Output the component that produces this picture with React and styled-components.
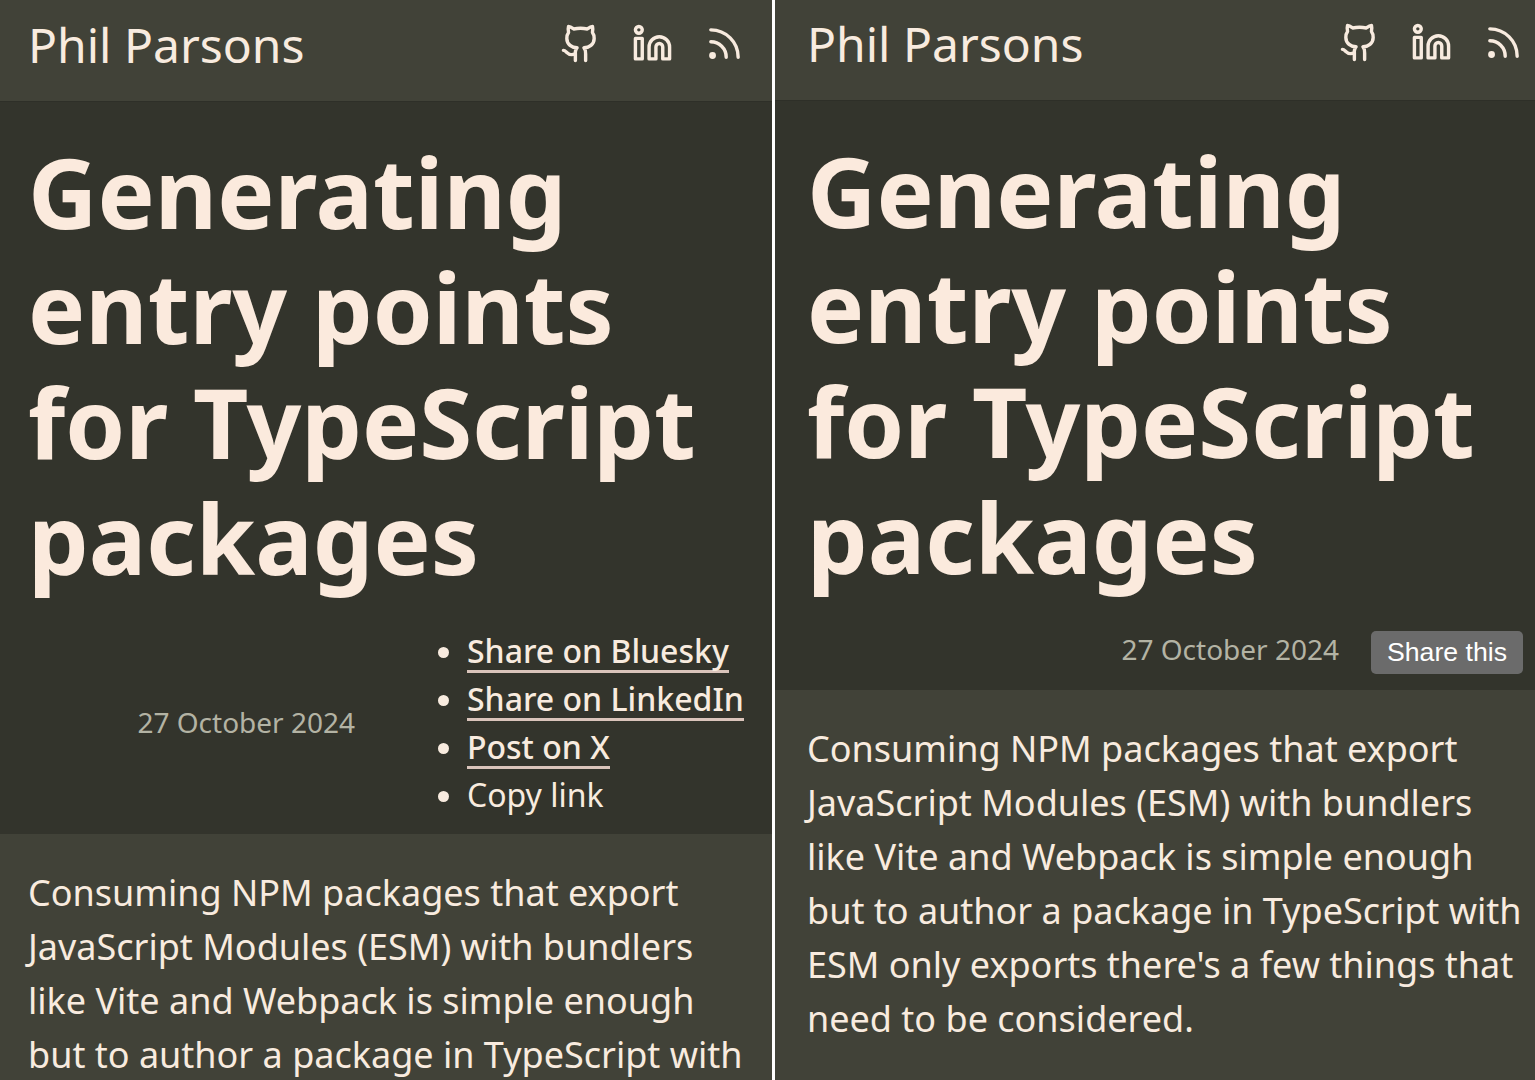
import React from 'react';
import styled, { createGlobalStyle } from 'styled-components';
import { Github, Linkedin, Rss } from 'lucide-react';

const GlobalStyle = createGlobalStyle`
  * { box-sizing: border-box; }
  body {
    margin: 0;
    background: #fff;
    color: #f8ebdf;
    font-family: "Noto Sans", sans-serif;
    overflow: hidden;
  }
`;

const Comparison = styled.main`
  display: grid;
  grid-template-columns: 772px 760px;
  column-gap: 3px;
  width: 1535px;
  height: 1080px;
  overflow: hidden;
`;

const Page = styled.article`
  --start: ${(p) => p.$start};
  --end: ${(p) => p.$end};
  display: flex;
  flex-direction: column;
  min-width: 0;
  height: 1080px;
  overflow: hidden;
  background: #414238;
`;

const TopBar = styled.header`
  flex: none;
  display: flex;
  justify-content: space-between;
  align-items: flex-start;
  height: ${(p) => p.$height};
  padding: ${(p) => p.$top} ${(p) => p.$end} 0 var(--start);
`;

const SiteName = styled.a`
  font-size: 48px;
  line-height: 66px;
  margin-top: -11px;
  white-space: nowrap;
`;

const Social = styled.nav`
  display: flex;
  gap: 31px;
  svg { display: block; }
`;

const Hero = styled.section`
  flex: none;
  height: ${(p) => p.$height};
  padding-top: 32px;
  border-top: 1px solid #2e2f28;
  background: #33342c;
`;

const Title = styled.h1`
  margin: 0;
  padding-left: var(--start);
  color: #fbeadd;
  font-size: 96px;
  line-height: 115.2px;
  font-weight: 700;
  white-space: nowrap;
`;

const Meta = styled.div`
  display: flex;
  justify-content: flex-end;
  align-items: ${(p) => p.$align};
  padding: ${(p) => p.$top} var(--end) 0 var(--start);
`;

const Published = styled.time`
  margin: -1px ${(p) => p.$gap} 1px 0;
  color: #b3b3a4;
  font-size: 28px;
  line-height: 38px;
  white-space: nowrap;
`;

const ShareList = styled.ul`
  width: 278px;
  margin: 0;
  padding: 0;
  font-size: 32px;
  line-height: 48px;
  white-space: nowrap;
`;

const ShareItem = styled.li`
  height: 48px;
`;

const ShareLink = styled.a`
  display: inline-block;
  height: 46px;
  border-bottom: 3px solid #dac4bb;
  font-weight: 500;
`;

const ShareButton = styled.button`
  width: 152px;
  height: 43px;
  padding: 0;
  border: 0;
  border-radius: 5px;
  background: #6b6b6b;
  color: #fff;
  font: 26.67px/43px "Liberation Sans", Arial, sans-serif;
`;

const Intro = styled.p`
  margin: 0;
  padding: ${(p) => p.$top} 0 0 var(--start);
  font-size: 36px;
  line-height: 54px;
  white-space: nowrap;
`;

const titleLines = ['Generating', 'entry points', 'for TypeScript', 'packages'];
const introLines = [
  'Consuming NPM packages that export',
  'JavaScript Modules (ESM) with bundlers',
  'like Vite and Webpack is simple enough',
  'but to author a package in TypeScript with',
  "ESM only exports there's a few things that",
  'need to be considered.',
];

const Lines = ({ lines }) =>
  lines.map((line, i) => (
    <React.Fragment key={line}>
      {i > 0 && <br />}
      {line}
    </React.Fragment>
  ));

const Header = ({ height, top, end }) => (
  <TopBar $height={height} $top={top} $end={end}>
    <SiteName>Phil Parsons</SiteName>
    <Social>
      <Github size={41} />
      <Linkedin size={41} />
      <Rss size={41} />
    </Social>
  </TopBar>
);

export default function App() {
  return (
    <>
      <GlobalStyle />
      <Comparison>
        <Page $start="28px" $end="27px">
          <Header height="101px" top="22.6px" end="27.5px" />
          <Hero $height="733px">
            <Title><Lines lines={titleLines} /></Title>
            <Meta $top="32px" $align="center">
              <Published $gap="112px">27 October 2024</Published>
              <ShareList>
                <ShareItem><ShareLink>Share on Bluesky</ShareLink></ShareItem>
                <ShareItem><ShareLink>Share on LinkedIn</ShareLink></ShareItem>
                <ShareItem><ShareLink>Post on X</ShareLink></ShareItem>
                <ShareItem>Copy link</ShareItem>
              </ShareList>
            </Meta>
          </Hero>
          <Intro $top="32px"><Lines lines={introLines.slice(0, 4)} /></Intro>
        </Page>
        <Page $start="32px" $end="12px">
          <Header height="100px" top="21.6px" end="11.3px" />
          <Hero $height="590px">
            <Title><Lines lines={titleLines} /></Title>
            <Meta $top="37px" $align="flex-start">
              <Published $gap="32px">27 October 2024</Published>
              <ShareButton>Share this</ShareButton>
            </Meta>
          </Hero>
          <Intro $top="32px"><Lines lines={introLines} /></Intro>
        </Page>
      </Comparison>
    </>
  );
}
